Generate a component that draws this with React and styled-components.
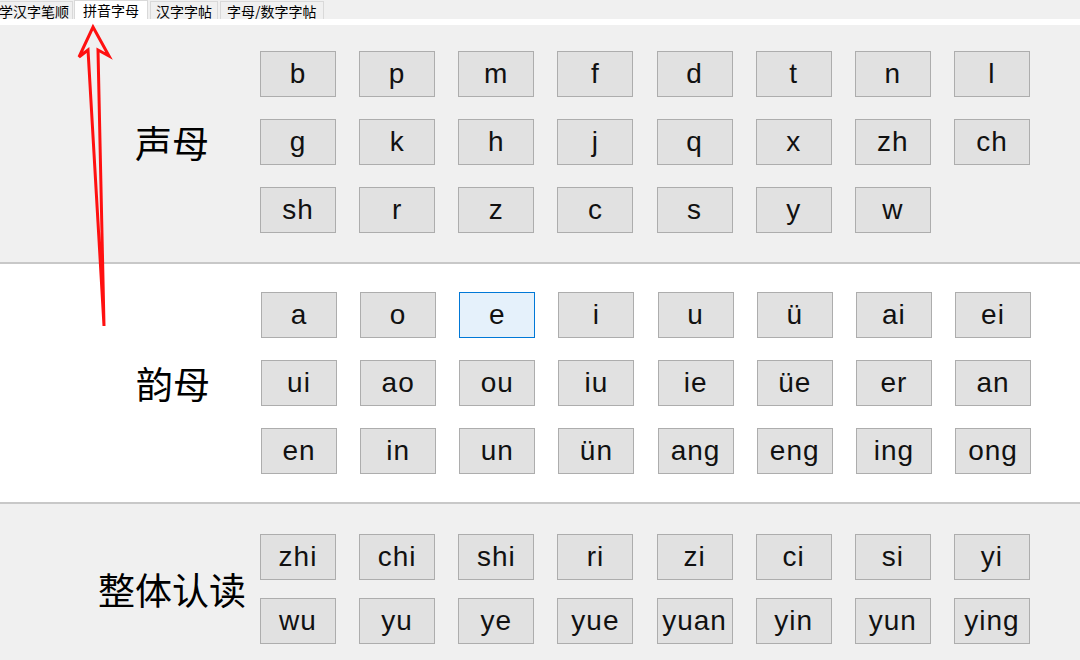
import React from "react";
import styled, { createGlobalStyle } from "styled-components";

const Global = createGlobalStyle`
  html, body { margin: 0; padding: 0; }
  body {
    width: 1080px; height: 660px; overflow: hidden;
    background: #f0f0f0;
    font-family: "Liberation Sans", "Noto Sans CJK SC", sans-serif;
  }
`;

const Page = styled.div`
  position: relative;
  width: 1080px;
  height: 660px;
  overflow: hidden;
  display: flex;
  flex-direction: column;
  background: #f0f0f0;
`;

const TabBar = styled.div`
  display: flex;
  align-items: flex-end;
  height: 19px;
  background: #f0f0f0;
  overflow: hidden;
`;

const Tab = styled.div`
  box-sizing: border-box;
  height: ${(p) => (p.$active ? "19px" : "18px")};
  margin-left: ${(p) => p.$offset || "2px"};
  padding: 0 ${(p) => p.$pad || "6px"};
  display: flex;
  align-items: center;
  font-family: "Noto Sans CJK SC", sans-serif;
  font-size: 14px;
  line-height: 1;
  color: #000;
  white-space: nowrap;
  background: ${(p) => (p.$active ? "#ffffff" : "#f0f0f0")};
  border: 1px solid #d9d9d9;
  border-bottom: none;
`;

const TabGap = styled.div`
  height: 6px;
  background: #ffffff;
`;

const Section = styled.div`
  display: flex;
  align-items: center;
  background: ${(p) => (p.$white ? "#ffffff" : "#f0f0f0")};
  padding: ${(p) => p.$pad};
  border-bottom: ${(p) => (p.$last ? "none" : "2px solid #c8c8c8")};
`;

const Label = styled.div`
  box-sizing: border-box;
  width: 260px;
  padding-left: 84px;
  text-align: center;
  font-family: "Noto Sans CJK SC", sans-serif;
  font-size: 37px;
  color: #000;
  white-space: nowrap;
`;

const Grid = styled.div`
  display: grid;
  grid-template-columns: repeat(8, 76px);
  column-gap: 23.15px;
  row-gap: ${(p) => p.$rowGap || "22px"};
`;

const Key = styled.div`
  box-sizing: border-box;
  height: 46px;
  display: flex;
  align-items: center;
  justify-content: center;
  background: ${(p) => (p.$focus ? "#e5f1fb" : "#e1e1e1")};
  border: 1px solid ${(p) => (p.$focus ? "#0078d7" : "#adadad")};
  font-family: "Liberation Sans", sans-serif;
  font-size: 28px;
  letter-spacing: 1px;
  color: #111;
  padding-bottom: 1px;
`;

const Arrow = styled.svg`
  position: absolute;
  left: 0;
  top: 0;
  pointer-events: none;
`;

const shengmu = ["b","p","m","f","d","t","n","l","g","k","h","j","q","x","zh","ch","sh","r","z","c","s","y","w"];
const yunmu = ["a","o","e","i","u","ü","ai","ei","ui","ao","ou","iu","ie","üe","er","an","en","in","un","ün","ang","eng","ing","ong"];
const zhengti = ["zhi","chi","shi","ri","zi","ci","si","yi","wu","yu","ye","yue","yuan","yin","yun","ying"];

export default function App() {
  return (
    <Page>
      <Global />
      <TabBar>
        <Tab $offset="-5px" $pad="3px">学汉字笔顺</Tab>
        <Tab $active $offset="1px" $pad="8px">拼音字母</Tab>
        <Tab $pad="5px">汉字字帖</Tab>
        <Tab $pad="6px">字母/数字字帖</Tab>
      </TabBar>
      <TabGap />
      <Section $pad="26px 0 29px 0">
        <Label>声母</Label>
        <Grid>
          {shengmu.map((s) => <Key key={s}>{s}</Key>)}
        </Grid>
      </Section>
      <Section $white $pad="28px 0 28px 1px">
        <Label>韵母</Label>
        <Grid>
          {yunmu.map((s) => <Key key={s} $focus={s === "e"}>{s}</Key>)}
        </Grid>
      </Section>
      <Section $last $pad="30px 0 0 0">
        <Label>整体认读</Label>
        <Grid $rowGap="18px">
          {zhengti.map((s) => <Key key={s}>{s}</Key>)}
        </Grid>
      </Section>
      <Arrow width="1080" height="660" viewBox="0 0 1080 660">
        <polygon
          points="93,27 109,56 98,50 104,326 88,50 79,57"
          fill="none"
          stroke="#ff1010"
          strokeWidth="3"
          strokeLinejoin="miter"
        />
      </Arrow>
    </Page>
  );
}
